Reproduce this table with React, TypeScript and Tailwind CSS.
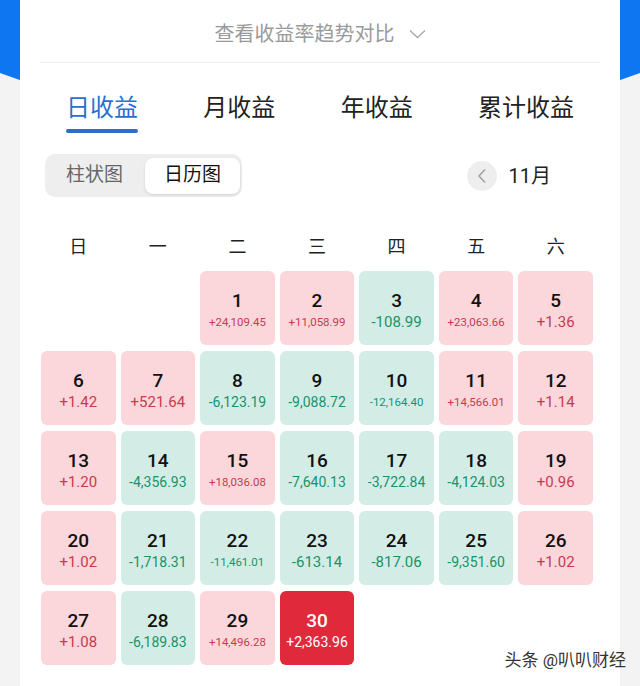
const days: [number, string][] = [
  [1, "+24,109.45"],
  [2, "+11,058.99"],
  [3, "-108.99"],
  [4, "+23,063.66"],
  [5, "+1.36"],
  [6, "+1.42"],
  [7, "+521.64"],
  [8, "-6,123.19"],
  [9, "-9,088.72"],
  [10, "-12,164.40"],
  [11, "+14,566.01"],
  [12, "+1.14"],
  [13, "+1.20"],
  [14, "-4,356.93"],
  [15, "+18,036.08"],
  [16, "-7,640.13"],
  [17, "-3,722.84"],
  [18, "-4,124.03"],
  [19, "+0.96"],
  [20, "+1.02"],
  [21, "-1,718.31"],
  [22, "-11,461.01"],
  [23, "-613.14"],
  [24, "-817.06"],
  [25, "-9,351.60"],
  [26, "+1.02"],
  [27, "+1.08"],
  [28, "-6,189.83"],
  [29, "+14,496.28"],
  [30, "+2,363.96"],
];

const weekdays = ["日", "一", "二", "三", "四", "五", "六"];
const tabs = ["日收益", "月收益", "年收益", "累计收益"];

function valueSize(v: string) {
  if (v.length >= 10) return "text-[11.5px]";
  if (v.length === 9) return "text-[14px]";
  return "text-[15px]";
}

function DayCell({ day, value }: { day: number; value: string }) {
  const up = value.startsWith("+");
  const today = day === 30;
  const box = today
    ? "bg-[#e02a3b] text-white"
    : up
    ? "bg-[#fbd6db] text-[#111]"
    : "bg-[#d3ede6] text-[#111]";
  const valColor = today ? "text-white" : up ? "text-[#c93a4e]" : "text-[#17936b]";
  return (
    <div className={`h-[74px] rounded-[6px] flex flex-col items-center justify-center pt-[5px] ${box}`}>
      <span className="text-[19px] leading-[22px] font-medium">{day}</span>
      <span className={`leading-[20px] ${valueSize(value)} ${valColor}`}>{value}</span>
    </div>
  );
}

export default function App() {
  const offset = 2;
  return (
    <div
      className="relative w-[640px] h-[686px] overflow-hidden bg-[#f3f3f3]"
      style={{ fontFamily: "Roboto, 'Noto Sans CJK SC', sans-serif" }}
    >
      {/* blue header backdrop */}
      <div className="absolute top-0 left-0 w-full h-[90px] bg-[#0e76f0] [clip-path:polygon(0_0,100%_0,100%_73px,96.9%_80px,3.1%_80px,0_73px)]" />

      <div className="relative mx-[20px] h-full bg-white">
        {/* trend compare */}
        <div className="h-[62px] pt-[5px] flex items-center justify-center gap-[14px] text-[20px] text-[#9a9a9a]">
          <span>查看收益率趋势对比</span>
          <svg width="17" height="10" viewBox="0 0 17 10" fill="none">
            <path d="M1 1.5 L8.5 8.5 L16 1.5" stroke="#a8a8a8" strokeWidth="1.3" />
          </svg>
        </div>
        <div className="mx-[20px] h-px bg-[#efefef]" />

        {/* tabs */}
        <div className="mt-[29px] px-[46px] flex justify-between">
          {tabs.map((t, i) => (
            <div key={t} className="flex flex-col items-stretch">
              <span
                className={`text-[24px] leading-[32px] ${
                  i === 0 ? "text-[#2a6fcf]" : "text-[#222]"
                }`}
              >
                {t}
              </span>
              <div
                className={`mt-[5px] h-[4px] rounded-full ${
                  i === 0 ? "bg-[#2a6fcf]" : "bg-transparent"
                }`}
              />
            </div>
          ))}
        </div>

        {/* chart type + month */}
        <div className="mt-[21px] pl-[25px] pr-[69px] flex items-center justify-between">
          <div className="h-[43px] w-[197px] rounded-[10px] bg-[#eeeeee] flex items-center pl-[21px] pr-[2px]">
            <span className="text-[19px] text-[#666]">柱状图</span>
            <span className="ml-auto h-[36px] w-[95px] rounded-[8px] bg-white shadow-[0_1px_3px_rgba(0,0,0,0.12)] flex items-center justify-center text-[19px] text-[#111]">
              日历图
            </span>
          </div>
          <div className="flex items-center gap-[12px]">
            <div className="w-[30px] h-[30px] rounded-full bg-[#eeeeee] flex items-center justify-center">
              <svg width="10" height="16" viewBox="0 0 10 16" fill="none">
                <path d="M8 1.5 L2 8 L8 14.5" stroke="#9d9d9d" strokeWidth="1.4" />
              </svg>
            </div>
            <span className="text-[20px] text-[#222]">11月</span>
          </div>
        </div>

        {/* weekdays */}
        <div className="mt-[38px] pl-[21px] pr-[27px] grid grid-cols-7 gap-x-[5px]">
          {weekdays.map((w) => (
            <span key={w} className="text-center text-[18px] leading-[24px] text-[#222]">
              {w}
            </span>
          ))}
        </div>

        {/* calendar */}
        <div className="mt-[12px] pl-[21px] pr-[27px] grid grid-cols-7 gap-x-[5px] gap-y-[6px]">
          {Array.from({ length: offset }).map((_, i) => (
            <div key={`e${i}`} />
          ))}
          {days.map(([d, v]) => (
            <DayCell key={d} day={d} value={v} />
          ))}
        </div>
      </div>

      {/* watermark */}
      <div className="absolute right-[14px] bottom-[13px] text-[17px] text-[#333] [text-shadow:0_0_2px_#fff,0_0_2px_#fff]">
        头条 @叭叭财经
      </div>
    </div>
  );
}
